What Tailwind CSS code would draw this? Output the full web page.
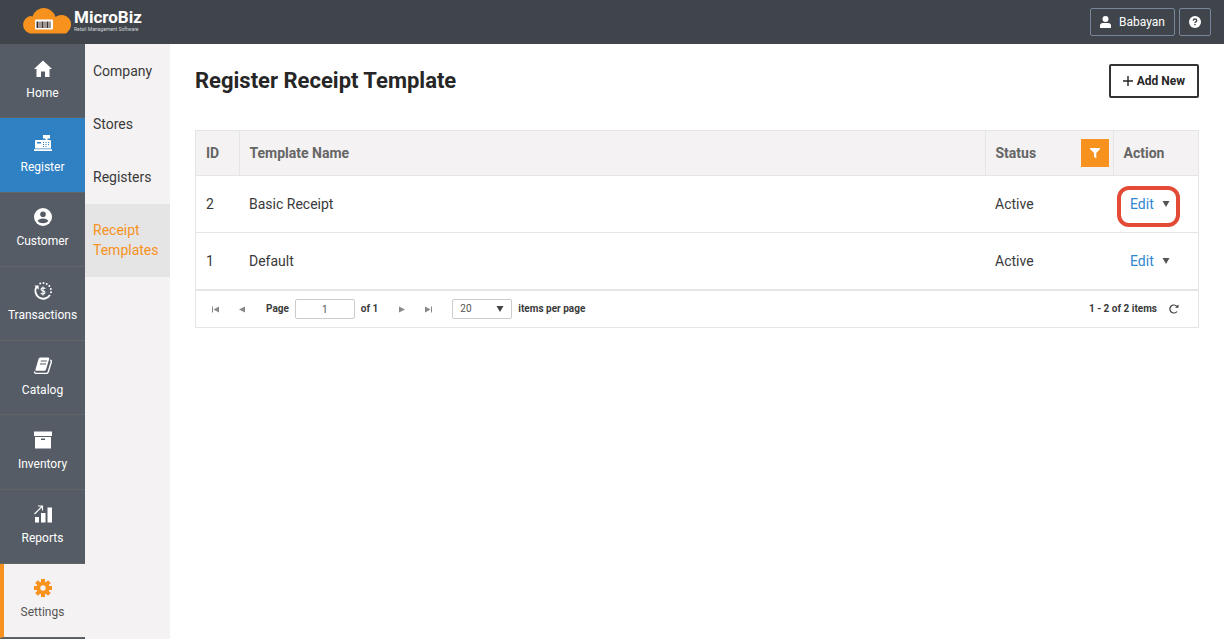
<!DOCTYPE html>
<html lang="en">
<head>
  <meta charset="UTF-8">
  <meta name="viewport" content="width=device-width, initial-scale=1">
  <title>Register Receipt Template</title>
  <script src="https://cdn.jsdelivr.net/npm/@tailwindcss/browser@4"></script>
</head>
<body class="flex min-h-screen flex-col bg-white font-['Roboto',sans-serif] text-sm text-[#3a3a3a]">

<!-- Top bar -->
<header class="flex h-11 items-center justify-between bg-[#40454b] pr-[13px] pl-[21px]">
  <a href="#" class="flex items-center gap-[3px] pb-1 text-white">
    <svg width="50" height="27" viewBox="0 0 50 27" aria-hidden="true">
      <path fill="#f7921e" d="M9 26.500A9 9 0 0 1 9 9q1.500 0 2.500.4A12 12 0 0 1 34.500 10a9.500 9.500 0 0 1 12 15q-1 1.500-2 1.500z" />
      <rect x="14" y="12.500" width="18" height="10" rx="1" fill="#fff" />
      <path fill="#40302a" d="M15.500 14.500h2v6.500h-2zM18.500 14.500h1v6.500h-1zM20.500 14.500h2v6.500h-2zM23.500 14.500h1v6.500h-1zM25.500 14.500h2v6.500h-2zM28.500 14.500h1v6.500h-1z" />
    </svg>
    <span class="flex flex-col gap-px">
      <span class="text-[17px] leading-4 font-bold">MicroBiz</span>
      <span class="text-[5px] leading-[6px] text-gray-300">Retail Management Software</span>
    </span>
  </a>
  <div class="flex gap-1">
    <button class="flex h-7 items-center gap-2 rounded-xs border border-[#76879b] px-[9px] text-xs text-white">
      <svg width="11" height="12" viewBox="0 0 11 12" fill="currentColor">
        <circle cx="5.500" cy="3" r="3" />
        <path d="M0 12v-2.500Q0 7 3 7h5q3 0 3 2.500V12z" />
      </svg>
      Babayan
    </button>
    <button class="flex h-7 w-8 items-center justify-center rounded-xs border border-[#76879b] text-white" aria-label="Help">
      <svg width="12" height="12" viewBox="0 0 12 12">
        <circle cx="6" cy="6" r="6" fill="#fff" />
        <path d="M4.300 4.700Q4.400 3 6 3t1.700 1.500Q7.700 5.400 6.700 6 6 6.400 6 7" fill="none" stroke="#40454b" stroke-width="1.400" />
        <rect x="5.300" y="7.900" width="1.400" height="1.400" fill="#40454b" />
      </svg>
    </button>
  </div>
</header>

<div class="flex flex-1">

  <!-- Main menu -->
  <nav class="flex w-[85px] flex-none flex-col bg-[#555c66] pb-px text-xs leading-5 text-white" aria-label="Main">
    <a href="#" class="flex flex-1 flex-col items-center justify-center gap-1 border-b border-[#636466]">
      <svg width="20" height="20" viewBox="0 0 20 20" fill="currentColor"><path d="M10 1.500 19 10h-2.500v8H12v-5.500H8V18H3.500v-8H1z" /></svg>
      Home
    </a>
    <a href="#" class="flex flex-1 flex-col items-center justify-center gap-1 border-b border-[#636466] bg-[#2f81c3]">
      <svg width="20" height="20" viewBox="0 0 20 20" fill="currentColor">
        <path fill-rule="evenodd" d="M10 2h7v3.500h-2.500V7H17q1 0 1 1v7.500H2V8q0-1 1-1h9.500V5.500H10zM4 9v1.500h4V9zM10 9v1h1V9zM12.500 9v1h1V9zM15 9v1h1V9zM10 11v1h1v-1zM12.500 11v1h1v-1zM15 11v1h1v-1zM10 13v1h1v-1zM12.500 13v1h1v-1z" />
        <path d="M1 16.200h18V18H1z" />
      </svg>
      Register
    </a>
    <a href="#" class="flex flex-1 flex-col items-center justify-center gap-1 border-b border-[#636466]">
      <svg width="20" height="20" viewBox="0 0 20 20">
        <circle cx="10" cy="10" r="9" fill="currentColor" />
        <g fill="#555c66"><circle cx="10" cy="7.300" r="2.800" /><path d="M4.500 14q1.500-2.500 5.500-2.500t5.500 2.500q-2 2.200-5.500 2.200T4.500 14z" /></g>
      </svg>
      Customer
    </a>
    <a href="#" class="flex flex-1 flex-col items-center justify-center gap-1 border-b border-[#636466]">
      <svg width="20" height="20" viewBox="0 0 20 20" fill="none" stroke="currentColor">
        <path d="M3.600 5.500A7.900 7.900 0 1 0 17 14" stroke-width="1.900" />
        <path d="M12.200 7.900Q11.800 6.900 10 6.900t-2 1.400Q8 9.500 10 9.900t2 1.600q-.2 1.600-2 1.600t-2.200-1.200M10 5.500v9" stroke-width="1.100" />
        <g fill="currentColor" stroke="none">
          <path d="M1.500 4.500h4.200v4.200z" />
          <circle cx="7.200" cy="2.600" r="1" /><circle cx="10.500" cy="2" r="1" /><circle cx="13.700" cy="2.900" r="1" />
          <circle cx="16.300" cy="5" r="1" /><circle cx="17.800" cy="8" r="1" /><circle cx="18" cy="11.300" r="1" />
        </g>
      </svg>
      Transactions
    </a>
    <a href="#" class="flex flex-1 flex-col items-center justify-center gap-1 border-b border-[#636466]">
      <svg width="20" height="20" viewBox="0 0 20 20">
        <path fill="currentColor" d="M7.200 1.500h8q1.500 0 1 1.500l-3.200 10.500q-.4 1.300-1.700 1.300H3.100q-1 0-.7-1L5.500 3q.4-1.500 1.700-1.500z" />
        <path d="M17.300 4q1.500.7 1 2l-3 9.700q-.5 1.700-2 1.700H3.500q-2 0-2-1.900" fill="none" stroke="currentColor" stroke-width="1.400" />
        <path d="M7.800 5h6M7 8h6" stroke="#555c66" stroke-width="1.200" />
      </svg>
      Catalog
    </a>
    <a href="#" class="flex flex-1 flex-col items-center justify-center gap-1 border-b border-[#636466]">
      <svg width="20" height="20" viewBox="0 0 20 20" fill="currentColor"><path fill-rule="evenodd" d="M1 1.500h18V6H1zM2 7h16v11.500H2zM8 8.500V10h4V8.500z" /></svg>
      Inventory
    </a>
    <a href="#" class="flex flex-1 flex-col items-center justify-center gap-1 border-b border-[#636466]">
      <svg width="20" height="20" viewBox="0 0 20 20">
        <path fill="currentColor" d="M2 13h4v5.500H2zM8 9h4.500v9.500H8zM14.500 3.500H19v15h-4.500z" />
        <path d="M1.500 10 9 2.500M5 2h4.500v4.500" fill="none" stroke="currentColor" stroke-width="1.100" />
      </svg>
      Reports
    </a>
    <a href="#" class="flex flex-1 flex-col items-center justify-center gap-1 border-b border-l-4 border-b-[#636466] border-l-[#f7921e] bg-[#f4f2f3] pr-1 text-[#555]" aria-current="page">
      <svg width="20" height="20" viewBox="0 0 20 20">
        <g fill="#f7921e" stroke="#f7921e">
          <path d="M10 1v18M1 10h18M3.600 3.600l12.800 12.800M16.400 3.600 3.600 16.400" stroke-width="4" />
          <circle cx="10" cy="10" r="6.500" stroke="none" />
        </g>
        <circle cx="10" cy="10" r="2.700" fill="#f4f2f3" />
      </svg>
      Settings
    </a>
  </nav>

  <!-- Settings submenu -->
  <nav class="flex w-[85px] flex-none flex-col bg-[#f4f2f3] pt-px text-sm leading-5" aria-label="Settings">
    <a href="#" class="border-b border-transparent px-2 py-4">Company</a>
    <a href="#" class="border-b border-transparent px-2 py-4">Stores</a>
    <a href="#" class="border-b border-transparent px-2 py-4">Registers</a>
    <a href="#" class="border-b border-[#e5e5e5] bg-[#e5e5e5] px-2 py-4 text-[#f7921e]" aria-current="page">Receipt Templates</a>
  </nav>

  <main class="min-w-0 flex-1 px-[25px] pt-5">
    <div class="flex items-center justify-between">
      <h1 class="text-[22px] leading-8 font-bold text-[#262626]">Register Receipt Template</h1>
      <button class="flex h-[34px] items-center gap-1 rounded-xs border-2 border-[#333] px-3 text-xs font-bold text-[#262626]">
        <svg width="10" height="10" viewBox="0 0 10 10" stroke="currentColor" stroke-width="1.400"><path d="M5 0v10M0 5h10" /></svg>
        Add New
      </button>
    </div>

    <div class="mt-8 border border-[#e5e5e5]">
      <table class="w-full table-fixed border-collapse text-left">
        <thead class="bg-[#f4f2f3] text-[#656565]">
          <tr class="h-11 border-b border-[#e5e5e5]">
            <th class="w-[43px] border-r border-[#e5e5e5] px-[10px]">ID</th>
            <th class="border-r border-[#e5e5e5] px-[10px]">Template Name</th>
            <th class="w-32 border-r border-[#e5e5e5] pr-1 pl-[10px]">
              <div class="flex items-center justify-between">
                Status
                <button class="flex size-7 items-center justify-center bg-[#f7921e] text-white" aria-label="Filter">
                  <svg width="12" height="12" viewBox="0 0 12 12" fill="currentColor"><path d="M1 1h10v1L7.300 6v5.500L5 9.700V6L1 2z" /></svg>
                </button>
              </div>
            </th>
            <th class="w-[85px] px-[10px]">Action</th>
          </tr>
        </thead>
        <tbody>
          <tr class="h-[57px] border-b border-[#e5e5e5]">
            <td class="px-[10px]">2</td>
            <td class="px-[10px]">Basic Receipt</td>
            <td class="px-[10px]">Active</td>
            <td class="relative pl-[17px]">
              <button class="flex items-center gap-2 text-[#2f86d0]">Edit
                <svg width="8" height="6" viewBox="0 0 8 6" fill="#555"><path d="M.5 0h7L4 6z" /></svg>
              </button>
              <span class="pointer-events-none absolute top-[10px] left-1 h-[41px] w-[63px] rounded-xl border-4 border-[#e34b37]"></span>
            </td>
          </tr>
          <tr class="h-[57px]">
            <td class="px-[10px]">1</td>
            <td class="px-[10px]">Default</td>
            <td class="px-[10px]">Active</td>
            <td class="pl-[17px]">
              <button class="flex items-center gap-2 text-[#2f86d0]">Edit
                <svg width="8" height="6" viewBox="0 0 8 6" fill="#555"><path d="M.5 0h7L4 6z" /></svg>
              </button>
            </td>
          </tr>
        </tbody>
      </table>

      <!-- Pager -->
      <div class="flex h-[38px] items-center border-t-2 border-[#e5e5e5] pr-[19px] pl-4 text-[10px] font-bold">
        <button class="text-[#888]" aria-label="First page">
          <svg width="7" height="7" viewBox="0 0 7 6" fill="currentColor"><path d="M0 0h1v6H0zM7 0v6L1.500 3z" /></svg>
        </button>
        <button class="ml-5 text-[#888]" aria-label="Previous page">
          <svg width="6" height="7" viewBox="0 0 6 6" fill="currentColor"><path d="M6 0v6L0 3z" /></svg>
        </button>
        <label for="page" class="ml-[21px]">Page</label>
        <input id="page" type="text" value="1" class="ml-[6px] h-5 w-[60px] rounded-xs border border-[#ccc] text-center font-normal text-[#555]">
        <span class="ml-[6px]">of 1</span>
        <button class="ml-[21px] text-[#888]" aria-label="Next page">
          <svg width="6" height="7" viewBox="0 0 6 6" fill="currentColor"><path d="M0 0v6l6-3z" /></svg>
        </button>
        <button class="ml-5 text-[#888]" aria-label="Last page">
          <svg width="7" height="7" viewBox="0 0 7 6" fill="currentColor"><path d="M6 0h1v6H6zM0 0v6l5.500-3z" /></svg>
        </button>
        <span class="relative ml-5 flex items-center">
          <select id="page-size" class="h-5 w-[60px] appearance-none rounded-xs border border-[#ccc] pl-[7px] font-normal text-[#555]">
            <option>20</option>
            <option>50</option>
            <option>100</option>
          </select>
          <svg class="pointer-events-none absolute right-2" width="8" height="6" viewBox="0 0 8 6" fill="#444"><path d="M.5 0h7L4 6z" /></svg>
        </span>
        <label for="page-size" class="ml-[6px]">items per page</label>
        <span class="mr-3 ml-auto">1 - 2 of 2 items</span>
        <button aria-label="Refresh">
          <svg width="10" height="10" viewBox="0 0 10 10" fill="none" stroke="currentColor" stroke-width="1.200"><path d="M8 7.500A4 4 0 1 1 7.800 2.300" /><path d="M6 3.800h3.500V.5z" fill="currentColor" stroke="none" /></svg>
        </button>
      </div>
    </div>
  </main>
</div>

</body>
</html>
